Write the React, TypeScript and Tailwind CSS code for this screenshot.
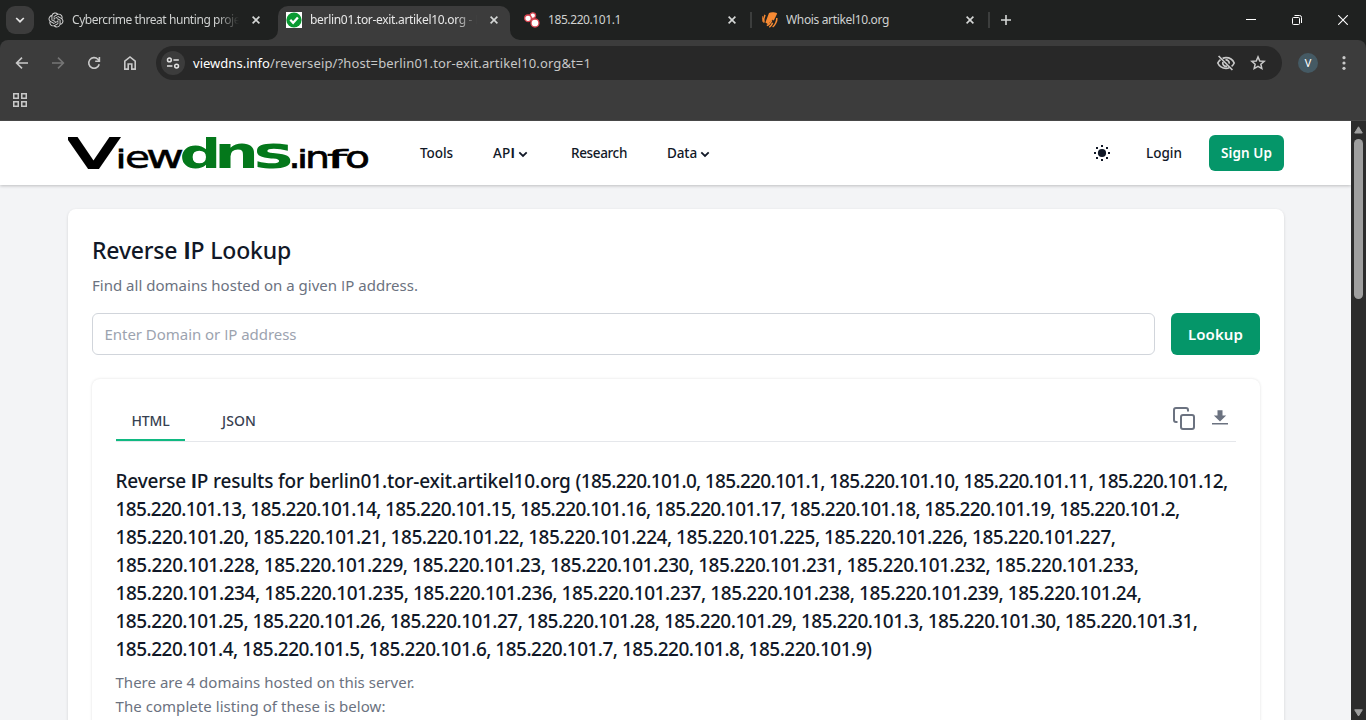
import { useLayoutEffect, useRef, useState } from "react";

/* Text set to a fixed measure by adjusting its tracking. */
function Fit({
  w,
  text,
  className = "",
  cap = "font-['Open_Sans']",
}: {
  w: number;
  text: string;
  className?: string;
  cap?: string;
}) {
  const ref = useRef<HTMLSpanElement>(null);
  const [ls, setLs] = useState(0);
  useLayoutEffect(() => {
    if (ref.current) {
      setLs((w - ref.current.getBoundingClientRect().width) / text.length);
    }
  }, [w, text]);
  return (
    <span ref={ref} className={`inline-block whitespace-pre ${className}`} style={{ letterSpacing: ls }}>
      {text.split("I").map((part, i) => (
        <span key={i}>
          {i > 0 && <span className={cap}>I</span>}
          {part}
        </span>
      ))}
    </span>
  );
}

const boldCap = "font-['Open_Sans'] font-bold";

function Close() {
  return (
    <svg width="8" height="8" viewBox="0 0 8 8" className="shrink-0 text-[#d5d7d6]">
      <path d="M.6.6l6.8 6.8M7.4.6L.6 7.4" stroke="currentColor" strokeWidth="1.6" />
    </svg>
  );
}

function Knot() {
  return (
    <svg width="16" height="16" viewBox="-0.8 -0.8 25.6 25.6" fill="#d4d4d4">
      <path d="M22.282 9.821a5.985 5.985 0 0 0-.516-4.91 6.046 6.046 0 0 0-6.51-2.9A6.065 6.065 0 0 0 4.981 4.18a5.985 5.985 0 0 0-3.998 2.9 6.046 6.046 0 0 0 .743 7.097 5.98 5.98 0 0 0 .51 4.911 6.051 6.051 0 0 0 6.515 2.9A5.985 5.985 0 0 0 13.26 24a6.056 6.056 0 0 0 5.772-4.206 5.99 5.99 0 0 0 3.997-2.9 6.056 6.056 0 0 0-.747-7.073zM13.26 22.43a4.476 4.476 0 0 1-2.876-1.04l.141-.081 4.779-2.758a.795.795 0 0 0 .392-.681v-6.737l2.02 1.168a.071.071 0 0 1 .038.052v5.583a4.504 4.504 0 0 1-4.494 4.494zM3.6 18.304a4.47 4.47 0 0 1-.535-3.014l.142.085 4.783 2.759a.771.771 0 0 0 .78 0l5.843-3.369v2.332a.08.08 0 0 1-.033.062L9.74 19.95a4.5 4.5 0 0 1-6.14-1.646zM2.34 7.896a4.485 4.485 0 0 1 2.366-1.973V11.6a.766.766 0 0 0 .388.676l5.815 3.355-2.02 1.168a.076.076 0 0 1-.071 0l-4.83-2.786A4.504 4.504 0 0 1 2.34 7.872zm16.597 3.855l-5.833-3.387L15.119 7.2a.076.076 0 0 1 .071 0l4.83 2.791a4.494 4.494 0 0 1-.676 8.105v-5.678a.79.79 0 0 0-.407-.667zm2.01-3.023l-.141-.085-4.774-2.782a.776.776 0 0 0-.785 0L9.409 9.23V6.897a.066.066 0 0 1 .028-.061l4.83-2.787a4.5 4.5 0 0 1 6.68 4.66zM8.307 12.863l-2.02-1.164a.08.08 0 0 1-.038-.057V6.075a4.5 4.5 0 0 1 7.375-3.453l-.142.08L8.704 5.46a.795.795 0 0 0-.393.681zm1.097-2.365l2.602-1.5 2.607 1.5v2.999l-2.597 1.5-2.607-1.5z" />
    </svg>
  );
}

function CheckFav() {
  return (
    <svg width="16" height="16" viewBox="0 0 16 16">
      <rect width="16" height="16" fill="#fff" />
      <circle cx="8" cy="8" r="7.6" fill="#0a9a32" />
      <path d="M4.3 7.8l2.8 2.9 4.8-5.2" fill="none" stroke="#fff" strokeWidth="2.3" />
    </svg>
  );
}

function DotsFav() {
  return (
    <svg width="16" height="16" viewBox="0 0 16 16" fill="#fff" stroke="#d9434f" strokeWidth="1.3">
      <circle cx="8.8" cy="3.6" r="2.8" />
      <circle cx="4" cy="6.3" r="3.3" />
      <circle cx="11" cy="11" r="4" />
    </svg>
  );
}

function WhoisFav() {
  return (
    <svg width="16" height="16" viewBox="0 0 16 16">
      <path d="M7 1C9 0 13 .2 15.2 1.4L11.8 8.6l-1.4-.8c-1.8.7-3.2 3.2-4 4.8L3.400 10.6z" fill="#f78a33" />
      <path d="M4.8 13.6c1.4-.3 4-3.4 5-5.2M7.200 15c1.2-.2 2.8-2.8 3.400-4.200M14.800 6c.4 3-1.800 7.400-4.200 9M3 2.800C1.800 5.200 1.400 8 2 10.600" fill="none" stroke="#f78a33" strokeWidth="1.5" />
      <path d="M.6 4.400C.1 6 .2 8.400.7 9.600" fill="none" stroke="#f78a33" />
    </svg>
  );
}

function TabTitle({ w, text, fade }: { w: number; text: string; fade?: boolean }) {
  return (
    <div
      className={`ml-2 h-[18px] w-[168px] overflow-hidden text-[12px] leading-[18px] ${
        fade ? "[mask-image:linear-gradient(to_right,black_145px,transparent_167px)]" : ""
      }`}
    >
      <Fit w={w} text={text} />
    </div>
  );
}

function TabStrip() {
  return (
    <div className="flex h-10 bg-[#1f2120] text-[#cfd1d0]">
      <div className="flex w-10 items-center pl-[6px]">
        <div className="flex h-7 w-7 items-center justify-center rounded-[9px] bg-[#3c3c3c]">
          <svg width="10" height="6" viewBox="0 0 10 6">
            <path d="M1.2 1L5 4.7 8.8 1" fill="none" stroke="#e3e3e3" strokeWidth="1.7" />
          </svg>
        </div>
      </div>
      <div className="flex w-[238px] items-center pl-2">
        <Knot />
        <TabTitle w={168} text="Cybercrime threat hunting proje" fade />
        <div className="ml-[12px] flex">
          <Close />
        </div>
      </div>
      <div className="relative mr-[6px] mt-[6px] flex h-[34px] w-[232px] items-center rounded-t-[10px] bg-[#3c3c3c] pb-[6px] pl-2 text-[#e8e8e8]">
        <svg width="10" height="10" className="absolute -left-[10px] bottom-0">
          <path d="M10 0v10H0A10 10 0 0 0 10 0z" fill="#3c3c3c" />
        </svg>
        <svg width="10" height="10" className="absolute -right-[10px] bottom-0">
          <path d="M0 0v10h10A10 10 0 0 1 0 0z" fill="#3c3c3c" />
        </svg>
        <CheckFav />
        <TabTitle w={168} text="berlin01.tor-exit.artikel10.org - I" fade />
        <div className="ml-[12px] flex">
          <Close />
        </div>
      </div>
      <div className="flex w-[238px] items-center pl-2">
        <DotsFav />
        <TabTitle w={73} text="185.220.101.1" />
        <div className="ml-[12px] flex">
          <Close />
        </div>
        <div className="ml-[14px] h-4 w-[2px] bg-[#3c3e3d]" />
      </div>
      <div className="flex w-[238px] items-center pl-2">
        <WhoisFav />
        <TabTitle w={103} text="Whois artikel10.org" />
        <div className="ml-[12px] flex">
          <Close />
        </div>
        <div className="ml-[14px] h-4 w-[2px] bg-[#3c3e3d]" />
      </div>
      <div className="flex flex-1 items-center justify-between pl-[9px] pr-[18px]">
        <svg width="10" height="10" viewBox="0 0 10 10">
          <path d="M5 0v10M0 5h10" stroke="#d5d7d6" strokeWidth="1.6" />
        </svg>
        <div className="flex items-center gap-9 text-white">
          <svg width="10" height="10" viewBox="0 0 10 10">
            <path d="M0 4.5h10" stroke="currentColor" />
          </svg>
          <svg width="10" height="10" viewBox="0 0 10 10" fill="none" stroke="currentColor">
            <rect x=".5" y="2.5" width="7" height="7" rx="1" />
            <path d="M2.5.5H7.6a1.9 1.9 0 0 1 1.9 1.9V8" />
          </svg>
          <svg width="10" height="10" viewBox="0 0 10 10">
            <path d="M.2.2l9.6 9.6M9.8.2L.2 9.8" stroke="currentColor" strokeWidth="1.1" />
          </svg>
        </div>
      </div>
    </div>
  );
}

function Toolbar() {
  return (
    <div className="bg-[#1f2120]">
      <div className="flex h-[46px] items-center rounded-t-[8px] bg-[#3c3c3c] pl-[14px] text-[#c9c9c9]">
        <svg width="16" height="16" viewBox="0 0 16 16" fill="none" stroke="currentColor" strokeWidth="1.6">
          <path d="M14 8H3M8 2.6L2.6 8 8 13.4" />
        </svg>
        <svg width="16" height="16" viewBox="0 0 16 16" fill="none" stroke="#757575" strokeWidth="1.6" className="ml-5">
          <path d="M2 8h11M8 2.6L13.4 8 8 13.4" />
        </svg>
        <svg width="16" height="16" viewBox="0 0 16 16" fill="none" stroke="currentColor" strokeWidth="1.6" className="ml-5">
          <path d="M13.2 9.2a5.3 5.3 0 1 1-1.3-4.9l1.4 1.5M13.4 2v4.2H9.2" />
        </svg>
        <svg width="16" height="16" viewBox="0 0 16 16" fill="none" stroke="currentColor" strokeWidth="1.6" className="ml-5">
          <path d="M2.8 6.2L8 2l5.2 4.2v7.9H9.8V9H6.2v5.1H2.8z" />
        </svg>
        <div className="ml-[18px] flex h-[34px] w-[1126px] items-center rounded-full bg-[#282828] pl-[5px]">
          <div className="flex h-6 w-6 items-center justify-center rounded-full bg-[#3c3c3c]">
            <svg width="14" height="14" viewBox="0 0 14 14" fill="none" stroke="#e0e0e0" strokeWidth="1.5">
              <circle cx="3.4" cy="3.9" r="1.9" />
              <path d="M7.4 3.9h5.4M1 10.1h5.4" />
              <circle cx="10.6" cy="10.1" r="1.9" />
            </svg>
          </div>
          <div className="ml-2 flex flex-1 text-[13px] leading-[18px]">
            <Fit w={77} text="viewdns.info" className="text-white" />
            <Fit w={321} text="/reverseip/?host=berlin01.tor-exit.artikel10.org&t=1" className="text-[#c7c7c7]" />
          </div>
          <svg width="20" height="18" viewBox="0 0 20 18" fill="none" stroke="currentColor" strokeWidth="1.7">
            <path d="M6.6 4.4A9 9 0 0 1 10 3.7c3.8 0 6.8 2.1 8.2 5.3a9 9 0 0 1-2.6 3.3M4.5 5.6A9 9 0 0 0 1.8 9c1.4 3.2 4.4 5.3 8.2 5.3 1.2 0 2.3-.2 3.3-.6" />
            <path d="M2.6 2l13.800 14M6.900 8a3.300 3.300 0 0 0 4.200 4.200M9.500 5.900a3.300 3.300 0 0 1 3.700 3.700" />
          </svg>
          <svg width="16" height="16" viewBox="0 0 16 16" fill="none" stroke="currentColor" strokeWidth="1.5" className="ml-[14px] mr-4">
            <path d="M8 1.900l1.750 4.050 4.400.4-3.300 2.900.97 4.300L8 11.300l-3.820 2.250.97-4.300-3.300-2.900 4.400-.4z" />
          </svg>
        </div>
        <div className="ml-4 flex h-5 w-5 items-center justify-center rounded-full bg-[#455a64] font-['Roboto'] text-[11px] leading-none text-white">
          V
        </div>
        <svg width="4" height="14" viewBox="0 0 4 14" fill="currentColor" className="ml-6">
          <circle cx="2" cy="1.7" r="1.6" />
          <circle cx="2" cy="7" r="1.6" />
          <circle cx="2" cy="12.3" r="1.6" />
        </svg>
      </div>
      <div className="flex h-[35px] items-start border-b border-[#474747] bg-[#3c3c3c] pl-[13px] pt-[7px]">
        <svg width="14" height="14" viewBox="0 0 14 14" fill="none" stroke="#c9c9c9" strokeWidth="1.5">
          <path d="M.75.75h4.500v4.500H.75zM8.750.75h4.500v4.500h-4.500zM.75 8.750h4.500v4.500H.75zM8.750 8.750h4.500v4.500h-4.500z" />
        </svg>
      </div>
    </div>
  );
}

function Logo() {
  return (
    <svg width="302" height="64" viewBox="0 -12 302 64" className="font-['DejaVu_Sans']">
      <g fill="#000" stroke="#000">
        <text x="0" y="34.500" fontSize="40" textLength="51" lengthAdjust="spacingAndGlyphs" strokeWidth="2">V</text>
        <text x="48" y="35" fontSize="24" textLength="10" lengthAdjust="spacingAndGlyphs" strokeWidth=".8">i</text>
        <text x="57" y="35" fontSize="31" textLength="25" lengthAdjust="spacingAndGlyphs" strokeWidth=".5">e</text>
        <text x="78" y="35" fontSize="32" textLength="38" lengthAdjust="spacingAndGlyphs" strokeWidth=".5">w</text>
      </g>
      <g fill="#04781b" fontWeight="700">
        <text x="111.400" y="35" fontSize="41" textLength="41.600" lengthAdjust="spacingAndGlyphs">d</text>
        <text x="146.200" y="35" fontSize="44" textLength="44.700" lengthAdjust="spacingAndGlyphs">n</text>
        <text x="185.600" y="35" fontSize="44" textLength="40" lengthAdjust="spacingAndGlyphs">s</text>
      </g>
      <g fill="#000" stroke="#000" strokeWidth=".6">
        <text x="222" y="35" fontSize="25" fontWeight="700" textLength="9" lengthAdjust="spacingAndGlyphs">.</text>
        <text x="229" y="35" fontSize="24" textLength="11" lengthAdjust="spacingAndGlyphs">i</text>
        <text x="237" y="35" fontSize="31" textLength="25" lengthAdjust="spacingAndGlyphs">n</text>
        <text x="259" y="35" fontSize="24" textLength="20" lengthAdjust="spacingAndGlyphs">f</text>
        <text x="277" y="35" fontSize="30" textLength="25" lengthAdjust="spacingAndGlyphs">o</text>
      </g>
    </svg>
  );
}

function Chevron() {
  return (
    <svg width="10" height="7" viewBox="0 0 10 7" className="ml-[3px] mt-[3px]">
      <path d="M1.300 1.300L5 4.900l3.700-3.600" fill="none" stroke="currentColor" strokeWidth="1.800" />
    </svg>
  );
}

function SiteHeader() {
  return (
    <header className="flex h-16 shrink-0 items-center bg-white pl-[68px] text-[13.5px] font-medium leading-5 text-[#111827] shadow-[0_1px_3px_rgba(0,0,0,0.22)]">
      <Logo />
      <div className="ml-[50px] flex w-[73px] items-center">
        <Fit w={33} text="Tools" />
      </div>
      <div className="flex w-[78px] items-center">
        <Fit w={22} text="API" cap={boldCap} />
        <Chevron />
      </div>
      <div className="flex w-24 items-center">
        <Fit w={56} text="Research" />
      </div>
      <div className="flex flex-1 items-center">
        <Fit w={30} text="Data" />
        <Chevron />
      </div>
      <svg width="18" height="18" viewBox="0 0 18 18" fill="currentColor">
        <circle cx="9" cy="9" r="4.1" />
        <path d="M8 1h2v2H8zM8 15h2v2H8zM1 8h2v2H1zM15 8h2v2h-2zM3 3h2v2H3zM13 3h2v2h-2zM3 13h2v2H3zM13 13h2v2h-2z" />
      </svg>
      <Fit w={36} text="Login" className="ml-[35px]" />
      <div className="ml-[27px] mr-[67px] flex h-9 w-[75px] items-center justify-center rounded-md bg-[#059669] font-semibold text-white">
        <Fit w={51} text="Sign Up" />
      </div>
    </header>
  );
}

const lines: [number, string][][] = [
  [
    [460, "Reverse IP results for berlin01.tor-exit.artikel10.org "],
    [652, "(185.220.101.0, 185.220.101.1, 185.220.101.10, 185.220.101.11, 185.220.101.12,"],
  ],
  [[1064, "185.220.101.13, 185.220.101.14, 185.220.101.15, 185.220.101.16, 185.220.101.17, 185.220.101.18, 185.220.101.19, 185.220.101.2,"]],
  [[1000, "185.220.101.20, 185.220.101.21, 185.220.101.22, 185.220.101.224, 185.220.101.225, 185.220.101.226, 185.220.101.227,"]],
  [[1023, "185.220.101.228, 185.220.101.229, 185.220.101.23, 185.220.101.230, 185.220.101.231, 185.220.101.232, 185.220.101.233,"]],
  [[1026, "185.220.101.234, 185.220.101.235, 185.220.101.236, 185.220.101.237, 185.220.101.238, 185.220.101.239, 185.220.101.24,"]],
  [[1082, "185.220.101.25, 185.220.101.26, 185.220.101.27, 185.220.101.28, 185.220.101.29, 185.220.101.3, 185.220.101.30, 185.220.101.31,"]],
  [[756, "185.220.101.4, 185.220.101.5, 185.220.101.6, 185.220.101.7, 185.220.101.8, 185.220.101.9)"]],
];

function Results() {
  return (
    <section className="mt-6 h-[400px] rounded-lg bg-white px-6 pt-[22px] shadow-[0_0_3px_rgba(0,0,0,0.12)]">
      <div className="flex h-[41px] border-b border-[#e5e7eb] text-[14px] font-medium leading-5 text-[#374151]">
        <div className="flex h-10 w-[69px] justify-center border-b-2 border-[#10b981] pt-[10px]">
          <Fit w={38} text="HTML" />
        </div>
        <div className="ml-[37px] flex-1 pt-[10px]">
          <Fit w={34} text="JSON" />
        </div>
        <div className="flex items-start gap-3 pr-1 text-[#6b7280]">
          <svg width="24" height="24" viewBox="0 0 24 24" fill="none" stroke="currentColor" strokeWidth="2" className="mt-[6px]">
            <rect x="9" y="8" width="13" height="14" rx="2" />
            <path d="M5.500 15H4a2 2 0 0 1-2-2V3a2 2 0 0 1 2-2h10a2 2 0 0 1 2 2v1.500" />
          </svg>
          <svg width="24" height="24" viewBox="0 0 24 24" fill="currentColor" className="mt-[5px]">
            <path d="M9.500 4.200h5V9.400h3.700L12 15.600 5.800 9.400h3.700zM4 17h16v1.500H4z" />
          </svg>
        </div>
      </div>
      <h2 className="-ml-[0.5px] mt-[25px] flex flex-col items-start text-[19px] font-medium leading-7 text-[#111827]">
        {lines.map((runs) => (
          <span key={runs[0][1]} className="flex">
            {runs.map(([w, t]) => (
              <Fit key={t} w={w} text={t} cap={boldCap} />
            ))}
          </span>
        ))}
      </h2>
      <div className="-ml-[0.5px] mt-[7px] flex flex-col items-start text-[15px] leading-6 text-[#6b7280]">
        <Fit w={299} text="There are 4 domains hosted on this server." />
        <Fit w={270} text="The complete listing of these is below:" />
      </div>
    </section>
  );
}

export default function App() {
  return (
    <div className="flex h-[720px] w-[1366px] flex-col overflow-hidden font-['Noto_Sans','Open_Sans',sans-serif]">
      <TabStrip />
      <Toolbar />
      <div className="flex min-h-0 flex-1">
        <div className="flex w-[1351px] flex-col overflow-hidden bg-[#f3f4f6]">
          <SiteHeader />
          <main className="ml-[68px] mt-6 h-[600px] w-[1216px] shrink-0 rounded-lg bg-white px-6 pt-[23px] shadow-[0_1px_3px_rgba(0,0,0,0.14)]">
            <h1 className="flex h-9 items-center text-[23px] font-medium text-[#111827]">
              <Fit w={199} text="Reverse IP Lookup" cap={boldCap} />
            </h1>
            <p className="mt-[5px] flex h-6 items-center text-[15px] text-[#6b7280]">
              <Fit w={326} text="Find all domains hosted on a given IP address." />
            </p>
            <div className="mt-4 flex gap-4">
              <div className="flex h-[42px] w-[1063px] items-center rounded-md border border-[#d1d5db] pl-[11.5px] text-[15px] text-[#9ca3af]">
                <Fit w={192} text="Enter Domain or IP address" />
              </div>
              <div className="flex h-[42px] w-[89px] items-center justify-center rounded-md bg-[#059669] text-[15px] font-semibold text-white">
                <Fit w={55} text="Lookup" />
              </div>
            </div>
            <Results />
          </main>
        </div>
        <div className="flex w-[15px] flex-col items-center bg-[#2c2c2c]">
          <svg width="9" height="8" viewBox="0 0 9 8" className="mt-[5px]">
            <path d="M4.500 .8L8.300 7H.7z" fill="#9f9f9f" stroke="#9f9f9f" strokeLinejoin="round" />
          </svg>
          <div className="mt-[5px] h-40 w-[9px] rounded-full bg-[#9f9f9f]" />
          <div className="flex-1" />
          <svg width="9" height="8" viewBox="0 0 9 8" className="mb-[3px]">
            <path d="M4.500 7L8.300 .8H.7z" fill="#9f9f9f" stroke="#9f9f9f" strokeLinejoin="round" />
          </svg>
        </div>
      </div>
    </div>
  );
}
